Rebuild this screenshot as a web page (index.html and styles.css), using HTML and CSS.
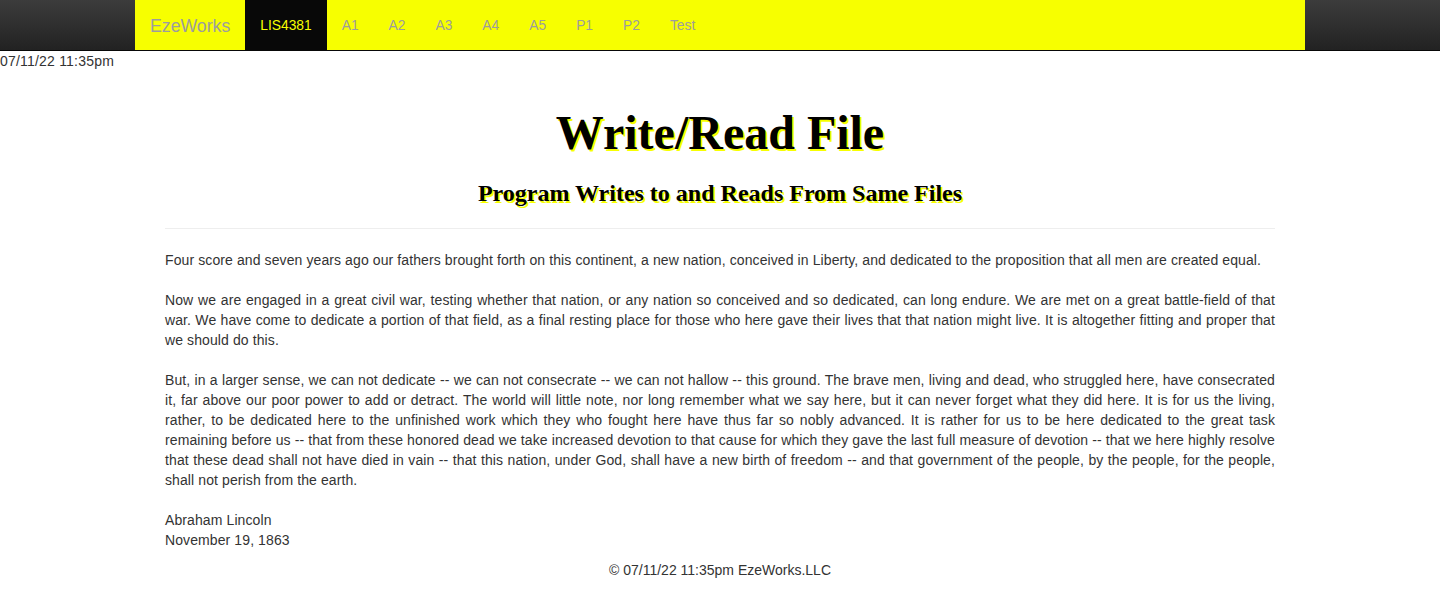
FILE: index.html
```html
<!DOCTYPE html>
<html lang="en">
<head>
<meta charset="utf-8">
<title>Write/Read File</title>
<link rel="stylesheet" href="styles.css">
</head>
<body>
<nav class="navbar">
  <div class="nav-container">
    <a class="brand" href="#">EzeWorks</a>
    <ul class="nav">
      <li class="active"><a href="#">LIS4381</a></li>
      <li><a href="#">A1</a></li>
      <li><a href="#">A2</a></li>
      <li><a href="#">A3</a></li>
      <li><a href="#">A4</a></li>
      <li><a href="#">A5</a></li>
      <li><a href="#">P1</a></li>
      <li><a href="#">P2</a></li>
      <li><a href="#">Test</a></li>
    </ul>
  </div>
</nav>
<div class="date">07/11/22 11:35pm</div>
<div class="container">
  <div class="inner">
    <header class="page-header">
      <h1>Write/Read File</h1>
      <h2>Program Writes to and Reads From Same Files</h2>
    </header>
    <p>Four score and seven years ago our fathers brought forth on this continent, a new nation, conceived in Liberty, and dedicated to the proposition that all men are created equal.</p>
    <p>Now we are engaged in a great civil war, testing whether that nation, or any nation so conceived and so dedicated, can long endure. We are met on a great battle-field of that war. We have come to dedicate a portion of that field, as a final resting place for those who here gave their lives that that nation might live. It is altogether fitting and proper that we should do this.</p>
    <p>But, in a larger sense, we can not dedicate -- we can not consecrate -- we can not hallow -- this ground. The brave men, living and dead, who struggled here, have consecrated it, far above our poor power to add or detract. The world will little note, nor long remember what we say here, but it can never forget what they did here. It is for us the living, rather, to be dedicated here to the unfinished work which they who fought here have thus far so nobly advanced. It is rather for us to be here dedicated to the great task remaining before us -- that from these honored dead we take increased devotion to that cause for which they gave the last full measure of devotion -- that we here highly resolve that these dead shall not have died in vain -- that this nation, under God, shall have a new birth of freedom -- and that government of the people, by the people, for the people, shall not perish from the earth.</p>
    <p class="last">Abraham Lincoln<br>November 19, 1863</p>
    <footer class="footer">© 07/11/22 11:35pm EzeWorks.LLC</footer>
  </div>
</div>
</body>
</html>
```
FILE: styles.css
```css
* { box-sizing: border-box; }
html, body { margin: 0; padding: 0; }
body {
  font-family: "Liberation Sans", Arial, Helvetica, sans-serif;
  font-size: 14px;
  line-height: 20px;
  color: #333;
  background: #fff;
}
.navbar {
  height: 51px;
  background: linear-gradient(to bottom, #3c3c3c 0%, #222 100%);
  border-bottom: 1px solid #080808;
}
.nav-container {
  width: 1170px;
  height: 50px;
  margin: 0 auto;
  background: #f7ff00;
  display: flex;
  align-items: stretch;
}
.brand {
  display: block;
  padding: 16px 15px 14px;
  height: 50px;
  font-size: 17.7px;
  line-height: 20px;
  color: #9d9d9d;
  text-decoration: none;
}
.nav {
  list-style: none;
  margin: 0;
  padding: 0;
  display: flex;
}
.nav li a {
  display: block;
  padding: 16px 15px 14px;
  height: 50px;
  font-size: 13.8px;
  line-height: 20px;
  color: #9d9d9d;
  text-decoration: none;
}
.nav li.active a {
  background: #080808;
  color: #f7ff00;
}
.date {
  height: 20px;
  letter-spacing: 0.2px;
}
.container {
  width: 1170px;
  margin: 0 auto;
  padding: 0 15px;
}
.inner {
  padding: 0 15px;
}
.page-header {
  text-align: center;
  padding-top: 35px;
  border-bottom: 1px solid #eee;
  margin-bottom: 21px;
}
.page-header h1 {
  font-family: "Liberation Serif", "Times New Roman", serif;
  font-weight: bold;
  font-size: 48px;
  line-height: 53px;
  margin: 0 0 21px;
  color: #000;
  text-shadow: 2px 2px 0 #f7ff00;
}
.page-header h2 {
  font-family: "Liberation Serif", "Times New Roman", serif;
  font-weight: bold;
  font-size: 24px;
  line-height: 26px;
  margin: 0 0 22px;
  color: #000;
  text-shadow: 2px 2px 0 #f7ff00;
}
p {
  margin: 0 0 20px;
  text-align: justify;
  letter-spacing: 0.1px;
}
p.last {
  margin-bottom: 10px;
  text-align: left;
}
.footer {
  text-align: center;
  height: 30px;
}
```
